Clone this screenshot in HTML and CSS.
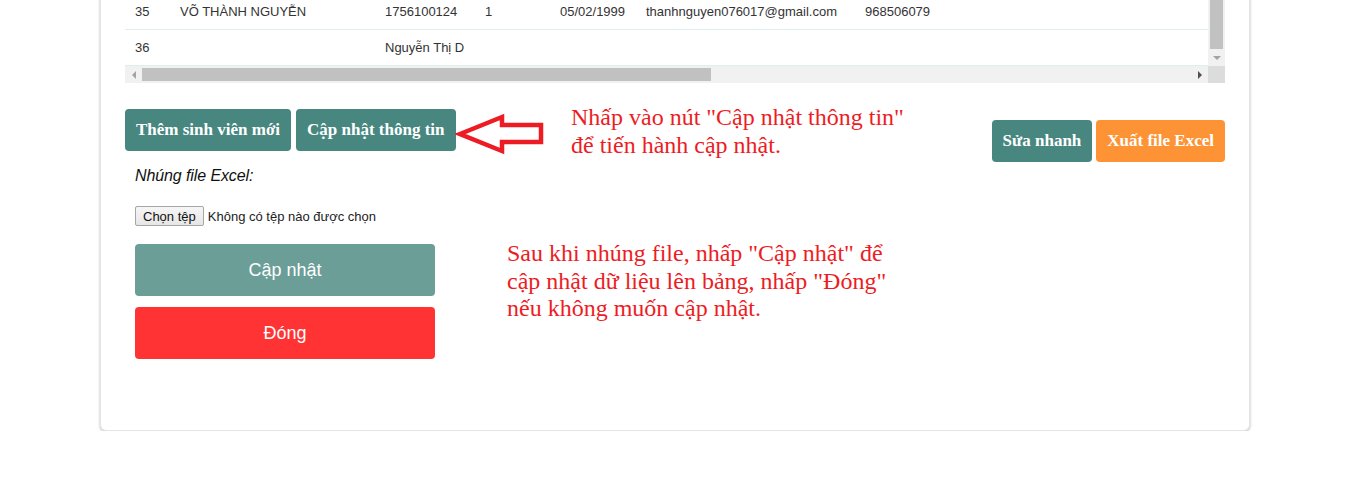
FILE: index.html
```html
<!DOCTYPE html>
<html lang="vi">
<head>
<meta charset="utf-8">
<title>Sinh viên</title>
<link rel="stylesheet" href="styles.css">
</head>
<body>
<div class="card">
  <div class="table-box">
    <div class="table-view">
      <table class="data">
        <colgroup>
          <col class="c1"><col class="c2"><col class="c3"><col class="c4"><col class="c5"><col class="c6"><col class="c7"><col class="c8">
        </colgroup>
        <tr><td>35</td><td>VÕ THÀNH NGUYỄN</td><td>1756100124</td><td>1</td><td>05/02/1999</td><td>thanhnguyen076017@gmail.com</td><td>968506079</td><td></td></tr>
        <tr><td>36</td><td></td><td>Nguyễn Thị D</td><td></td><td></td><td></td><td></td><td></td></tr>
      </table>
    </div>
    <div class="vscroll">
      <div class="vthumb"></div>
      <div class="vbtn"><span class="tri-down"></span></div>
    </div>
    <div class="hscroll">
      <div class="hbtn"><span class="tri-left"></span></div>
      <div class="htrack"><div class="hthumb"></div></div>
      <div class="hbtn"><span class="tri-right"></span></div>
    </div>
    <div class="corner"></div>
  </div>

  <div class="toolbar">
    <div class="btn-group">
      <button class="btn btn-teal">Thêm sinh viên mới</button>
      <button class="btn btn-teal">Cập nhật thông tin</button>
    </div>
    <div class="btn-group btn-group-right">
      <button class="btn btn-teal">Sửa nhanh</button>
      <button class="btn btn-orange">Xuất file Excel</button>
    </div>
  </div>

  <div class="import">
    <p class="import-label">Nhúng file Excel:</p>
    <div class="file-row"><span class="file-btn">Chọn tệp</span><span class="file-name">Không có tệp nào được chọn</span></div>
    <button class="wide-btn wide-update">Cập nhật</button>
    <button class="wide-btn wide-close">Đóng</button>
  </div>

  <svg class="callout-arrow" width="92" height="44" viewBox="0 0 92 44">
    <path d="M5 22 L47 5 L47 13 L86 13 L86 30 L47 30 L47 39 Z" fill="none" stroke="#ed1c24" stroke-width="4.5" stroke-linejoin="miter"/>
  </svg>
  <p class="note note-1">Nhấp vào nút "Cập nhật thông tin"<br>để tiến hành cập nhật.</p>
  <p class="note note-2">Sau khi nhúng file, nhấp "Cập nhật" để<br>cập nhật dữ liệu lên bảng, nhấp "Đóng"<br>nếu không muốn cập nhật.</p>
</div>
</body>
</html>
```

FILE: styles.css
```css
html, body {
  margin: 0;
  padding: 0;
  background: #fff;
}

body {
  font-family: "Liberation Sans", Arial, sans-serif;
  color: #333;
  overflow: hidden;
}

.card {
  position: relative;
  width: 1150px;
  box-sizing: border-box;
  margin: -6px 0 0 100px;
  padding: 0 24px 71px;
  background: #fff;
  border: 1px solid #e4e4e4;
  border-top: none;
  border-radius: 0 0 6px 6px;
  box-shadow: 0 1px 3px rgba(0, 0, 0, 0.28);
}

/* ---------- table with scrollbars ---------- */
.table-box {
  display: grid;
  grid-template-columns: 1083px 17px;
  grid-template-rows: 72px 17px;
}

.table-view {
  overflow: hidden;
}

.data {
  table-layout: fixed;
  width: 1900px;
  border-collapse: separate;
  border-spacing: 0;
  font-size: 13px;
  color: #333;
}

.data td {
  height: 35px;
  padding: 0 0 0 10px;
  border-bottom: 1px solid #dcefef;
  white-space: nowrap;
  vertical-align: middle;
}

.c1 { width: 45px; }
.c2 { width: 205px; }
.c3 { width: 100px; }
.c4 { width: 75px; }
.c5 { width: 86px; }
.c6 { width: 219px; }
.c7 { width: 200px; }

.vscroll {
  background: #f1f1f1;
  display: flex;
  flex-direction: column;
  justify-content: space-between;
}

.vthumb {
  margin: 0 2px;
  height: 57px;
  background: #c1c1c1;
}

.vbtn {
  height: 17px;
  display: flex;
  align-items: center;
  justify-content: center;
}

.tri-down {
  width: 0;
  height: 0;
  border-left: 4px solid transparent;
  border-right: 4px solid transparent;
  border-top: 4px solid #a3a3a3;
}

.hscroll {
  background: #f1f1f1;
  display: flex;
}

.hbtn {
  width: 17px;
  flex: none;
  display: flex;
  align-items: center;
  justify-content: center;
}

.htrack {
  flex: 1;
  padding: 2px 0;
}

.hthumb {
  width: 569px;
  height: 13px;
  background: #c1c1c1;
}

.tri-left {
  width: 0;
  height: 0;
  border-top: 4px solid transparent;
  border-bottom: 4px solid transparent;
  border-right: 4px solid #a3a3a3;
}

.tri-right {
  width: 0;
  height: 0;
  border-top: 4px solid transparent;
  border-bottom: 4px solid transparent;
  border-left: 4px solid #505050;
}

.corner {
  background: #dcdcdc;
}

/* ---------- toolbar ---------- */
.toolbar {
  display: flex;
  justify-content: space-between;
  align-items: flex-start;
  margin-top: 26px;
}

.btn-group {
  display: flex;
  gap: 5px;
}

.btn-group-right {
  margin-top: 11px;
  gap: 4px;
}

.btn {
  height: 42px;
  padding: 0 11px;
  border: none;
  border-radius: 4px;
  font-family: "Liberation Serif", "Times New Roman", serif;
  font-weight: 700;
  font-size: 17px;
  color: #fff;
}

.btn-teal { background: #47877f; }
.btn-orange { background: #fd9335; }

/* ---------- import form ---------- */
.import {
  padding-left: 10px;
}

.import-label {
  margin: 4px 0 0;
  font-style: italic;
  font-size: 16px;
  line-height: 20px;
  color: #111;
  letter-spacing: -0.1px;
}

.file-row {
  margin-top: 20px;
  display: flex;
  align-items: center;
  font-size: 13px;
  color: #222;
}

.file-btn {
  height: 20px;
  box-sizing: border-box;
  padding: 0 7px;
  display: flex;
  align-items: center;
  border: 1px solid #a6a6a6;
  border-radius: 2px;
  background: linear-gradient(#f6f6f6, #e6e6e6);
  color: #111;
}

.file-name {
  margin-left: 4px;
}

.wide-btn {
  display: block;
  width: 300px;
  height: 52px;
  border: none;
  border-radius: 4px;
  font-family: "Liberation Sans", Arial, sans-serif;
  font-size: 18px;
  color: #fff;
}

.wide-update {
  margin-top: 18px;
  background: #6a9e97;
}

.wide-close {
  margin-top: 11px;
  background: #ff3333;
}

/* ---------- screenshot annotations ---------- */
.callout-arrow {
  position: absolute;
  left: 354px;
  top: 118px;
}

.note {
  position: absolute;
  margin: 0;
  font-family: "Liberation Serif", "Times New Roman", serif;
  font-size: 24px;
  line-height: 27.5px;
  color: #ed1c24;
  white-space: nowrap;
}

.note-1 {
  left: 470px;
  top: 110px;
}

.note-2 {
  left: 406px;
  top: 246px;
}
```
